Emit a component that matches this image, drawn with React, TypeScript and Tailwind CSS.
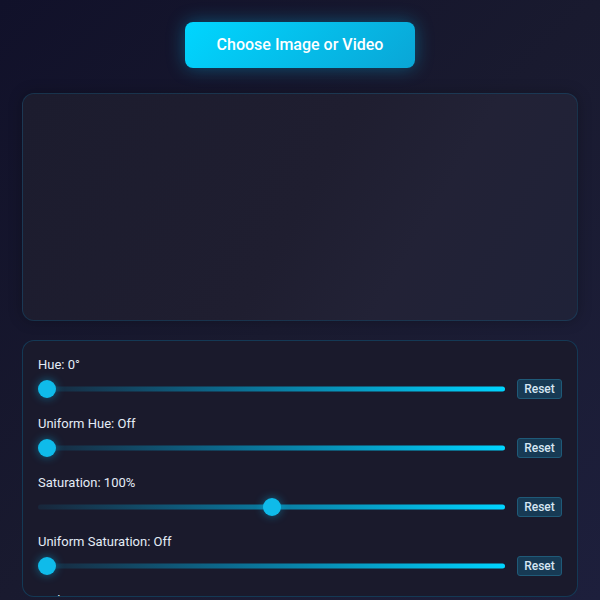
import { useState } from "react";

type Control = {
  label: string;
  value: number;
  min: number;
  max: number;
  display: (v: number) => string;
};

const controls: Control[] = [
  { label: "Hue", value: 0, min: 0, max: 360, display: (v) => `${v}°` },
  { label: "Uniform Hue", value: 0, min: 0, max: 1, display: (v) => (v ? "On" : "Off") },
  { label: "Saturation", value: 100, min: 0, max: 200, display: (v) => `${v}%` },
  { label: "Uniform Saturation", value: 0, min: 0, max: 1, display: (v) => (v ? "On" : "Off") },
  { label: "Red", value: 100, min: 0, max: 200, display: (v) => `${v}%` },
  { label: "Green", value: 100, min: 0, max: 200, display: (v) => `${v}%` },
];

function Slider({ control }: { control: Control }) {
  const [value, setValue] = useState(control.value);
  const pct = (value - control.min) / (control.max - control.min);

  return (
    <div className="mb-[16px]">
      <div className="h-[18px] text-[13px] leading-[18px] text-[#e4ecf6]">
        {control.label}: {control.display(value)}
      </div>
      <div className="mt-[5px] flex h-[20px] items-center gap-[12px]">
        <div className="relative h-[20px] flex-1">
          <div className="absolute inset-x-0 top-1/2 h-[5px] -translate-y-1/2 rounded-full bg-[linear-gradient(to_right,rgba(0,180,230,0.08),rgba(0,170,220,0.55)_40%,#00d4ff)]" />
          <div
            className="absolute top-1/2 h-[18px] w-[18px] -translate-y-1/2 rounded-full bg-[#0fbbea] shadow-[0_0_10px_rgba(0,200,255,0.45)]"
            style={{ left: `calc(${pct} * (100% - 18px))` }}
          />
        </div>
        <button
          onClick={() => setValue(control.value)}
          className="h-[20px] w-[45px] rounded-[3px] border border-[#1f5a78] bg-[#173a54] text-[12px] leading-[18px] font-medium text-[#d6e6f2]"
        >
          Reset
        </button>
      </div>
    </div>
  );
}

export default function App() {
  return (
    <div className="h-[600px] w-[600px] overflow-hidden bg-[linear-gradient(135deg,#11112a_0%,#191a2f_50%,#1d1f3c_100%)] px-[22px] pt-[22px] font-['Roboto','Liberation_Sans',sans-serif]">
      <div className="flex justify-center">
        <button className="h-[46px] w-[230px] rounded-[8px] bg-[linear-gradient(135deg,#00d6ff,#0aa6d6)] text-[16px] font-medium text-white shadow-[0_0_18px_rgba(0,200,255,0.35)]">
          Choose Image or Video
        </button>
      </div>

      <div className="mt-[25px] h-[228px] rounded-[12px] border border-[rgba(0,190,255,0.14)] bg-[linear-gradient(120deg,#1c1c2e_0%,#1f1e30_50%,#222236_70%,#1f2238_100%)] shadow-[0_0_14px_rgba(0,0,0,0.25)]" />

      <div className="mt-[19px] h-[257px] overflow-hidden rounded-[12px] border border-[rgba(0,170,230,0.22)] bg-[#1a1a2c] px-[15px] pt-[15px]">
        {controls.map((c) => (
          <Slider key={c.label} control={c} />
        ))}
      </div>
    </div>
  );
}
